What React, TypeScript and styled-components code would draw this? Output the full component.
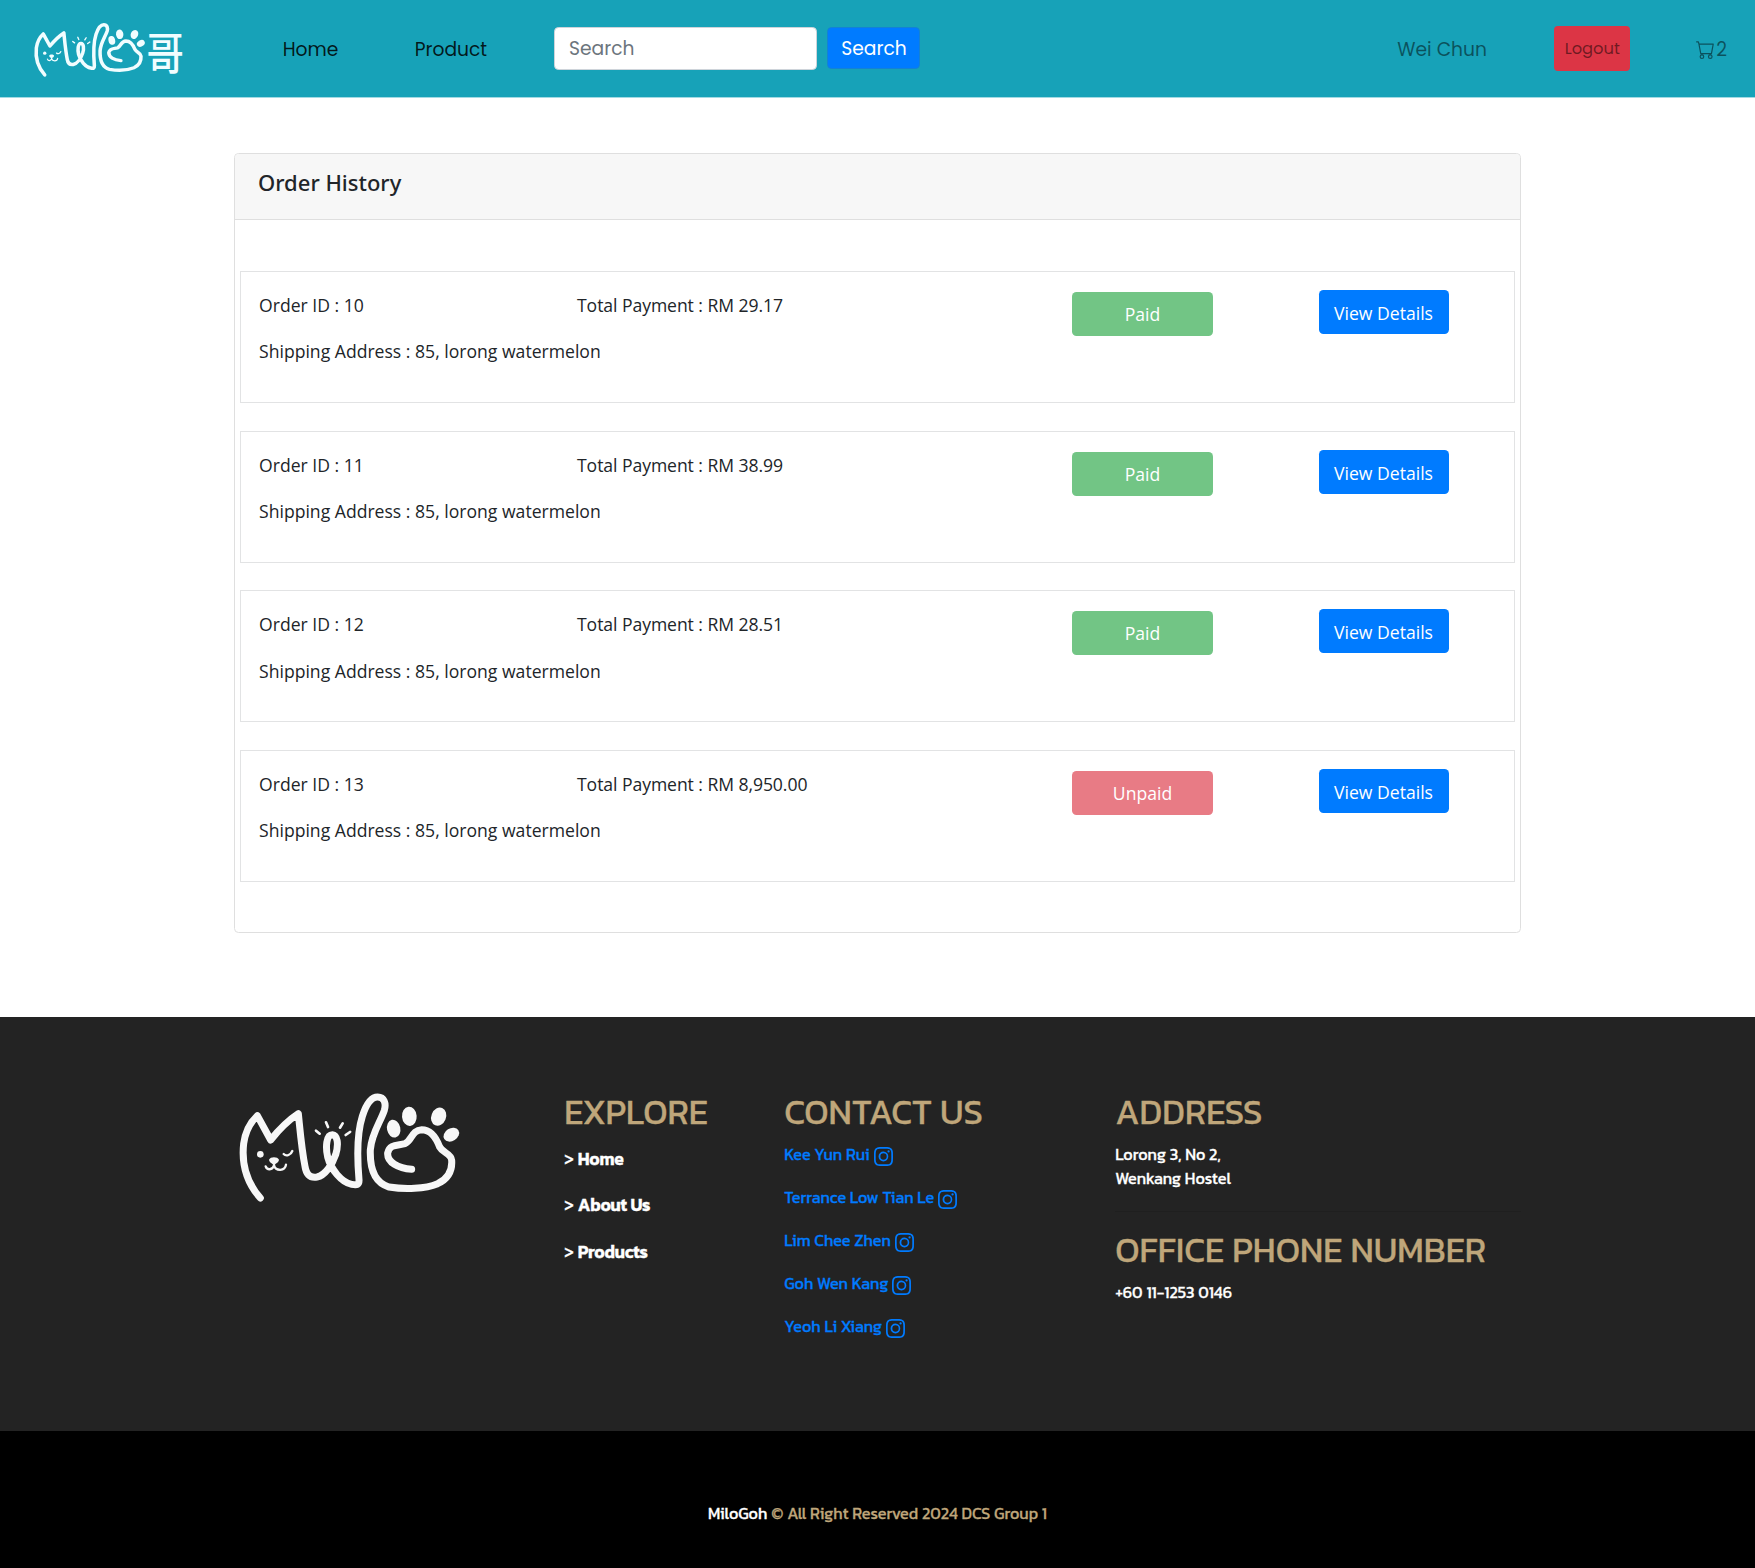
import React from "react";
import styled, { createGlobalStyle } from "styled-components";
import { BsCart, BsInstagram } from "react-icons/bs";

const uiFont = `"Open Sans", "Noto Sans", sans-serif`;
const navFont = `Poppins, Inter, sans-serif`;
const footerFont = `Kanit, Roboto, sans-serif`;

const GlobalStyle = createGlobalStyle`
  *, *::before, *::after { box-sizing: border-box; }
  body {
    margin: 0;
    background: #fff;
    color: #212529;
    font-family: ${uiFont};
    font-size: 17.6px;
    line-height: 27px;
  }
  a { text-decoration: none; }
`;

/* ---------- shared ---------- */

const Text = styled.span<{ $track?: number }>`
  letter-spacing: ${(p) => p.$track ?? 0}px;
  white-space: nowrap;
`;

const LogoSvg = styled.svg`
  display: block;
  flex: none;
  overflow: visible;
`;

function MiloArt() {
  return (
    <g fill="none" stroke="currentColor" strokeWidth={21} strokeLinecap="round" strokeLinejoin="round">
      <path d="M106 385 C62 335 50 275 56 222 C61 184 78 156 97 138 L137 211 C160 182 190 152 220 132 C226 190 230 240 240 290 C245 322 262 324 276 322 C300 317 322 285 332 255 C342 222 337 196 322 195 C304 195 301 232 308 262 C318 300 350 338 380 344 C396 347 403 346 402 330 C396 260 396 190 412 140 C424 102 440 82 458 82 C478 82 484 102 478 122 C466 158 440 190 436 240 C434 300 450 340 492 352 C540 360 600 358 638 342 C672 326 682 300 680 272 C678 250 655 252 644 232 C634 205 618 180 590 180 C560 181 562 212 540 222 C518 228 494 222 488 250 C486 278 520 296 560 299" />
      <g strokeWidth={7}>
        <path d="M122 290 C126 302 142 302 147 288 C152 304 180 306 183 285" />
        <path d="M147 277 V290" />
        <path d="M176 253 C184 262 198 255 202 244" />
      </g>
      <g strokeWidth={8}>
        <path d="M273 183 L284 192" />
        <path d="M303 158 L309 172" />
        <path d="M353 161 L345 174" />
        <path d="M375 187 L362 196" />
      </g>
      <g fill="currentColor" stroke="none">
        <circle cx="106" cy="254" r="10" />
        <path d="M132 270 C136 260 158 260 162 270 C160 280 152 282 147 284 C142 282 134 280 132 270 Z" />
        <ellipse cx="506" cy="177" rx="20" ry="27" transform="rotate(-12 506 177)" />
        <ellipse cx="553" cy="140" rx="22" ry="29" transform="rotate(-5 553 140)" />
        <ellipse cx="641" cy="141" rx="22" ry="28" transform="rotate(22 641 141)" />
        <ellipse cx="679" cy="195" rx="25" ry="19" transform="rotate(-32 679 195)" />
      </g>
    </g>
  );
}

/* ---------- navigation ---------- */

const Nav = styled.nav`
  display: flex;
  align-items: center;
  height: 98px;
  padding: 0 28px 0 33px;
  background: #17a2b8;
  border-bottom: 1px solid #a3dae3;
  font-family: ${navFont};
  font-size: 18.7px;
`;

const Brand = styled.a`
  display: flex;
  width: 249.7px;
  padding-top: 3px;
  color: #f1fdff;
`;

const Glyph = styled.text`
  fill: currentColor;
  font-family: "Noto Sans CJK SC", "Noto Sans CJK TC", sans-serif;
  font-size: 42px;
  font-weight: 500;
`;

const NavLink = styled.a<{ $width: number; $active?: boolean }>`
  flex: none;
  width: ${(p) => p.$width}px;
  padding-top: 2px;
  color: ${(p) => (p.$active ? "rgba(0,0,0,.85)" : "rgba(0,0,0,.5)")};
`;

const SearchForm = styled.form`
  display: flex;
  align-items: center;
  gap: 10px;
  flex: 1;
  padding-bottom: 1px;
`;

const SearchInput = styled.input`
  width: 263.5px;
  height: 43px;
  padding: 0 14px;
  border: 1px solid #ced4da;
  border-radius: 4.5px;
  background: #fff;
  font: inherit;
  &::placeholder { color: #6c757d; opacity: 1; }
`;

const SearchButton = styled.button`
  width: 93px;
  height: 42px;
  padding: 0;
  border: 1px solid #1482d3;
  border-radius: 4.5px;
  background: #007bff;
  color: #fff;
  font: inherit;
`;

const LogoutButton = styled.button`
  width: 76px;
  height: 45px;
  margin-right: 66px;
  padding: 0;
  border: 0;
  border-radius: 4px;
  background: #dc3545;
  color: rgba(0, 0, 0, 0.5);
  font: inherit;
  font-size: 16.3px;
`;

const CartLink = styled.a`
  display: flex;
  align-items: center;
  gap: 1px;
  padding-top: 2px;
  color: rgba(0, 0, 0, 0.5);
  svg { width: 19px; height: 19px; }
`;

/* ---------- order history ---------- */

const Card = styled.section`
  width: 1287px;
  margin: 55px auto 84px;
  border: 1px solid #dfdfdf;
  border-radius: 4.5px;
  background: #fff;
`;

const CardHeader = styled.header`
  height: 66px;
  padding: 15px 23px;
  background: #f7f7f7;
  border-bottom: 1px solid #dfdfdf;
  border-radius: 4px 4px 0 0;
`;

const CardTitle = styled.h5`
  margin: 0;
  font-family: "Noto Sans", "Open Sans", sans-serif;
  font-size: 22px;
  font-weight: 500;
  line-height: 27px;
`;

const OrderList = styled.div`
  display: flex;
  flex-direction: column;
  gap: 27.7px;
  padding: 51px 5px 50px;
`;

const OrderRow = styled.article`
  display: grid;
  grid-template-columns: 318px 494.5px 247px auto;
  height: 132px;
  padding: 18px 17px 18px 18px;
  border: 1px solid #e2e3e4;
`;

const OrderInfo = styled.div`
  display: flex;
  flex-direction: column;
  gap: 19.3px;
  padding-top: 2px;
`;

const Status = styled.button<{ $paid: boolean }>`
  width: 141px;
  height: 44px;
  margin-top: 2px;
  padding: 1px 0 0 1px;
  border: 0;
  border-radius: 4.5px;
  background: ${(p) => (p.$paid ? "#28a745" : "#dc3545")};
  color: #fff;
  font: inherit;
  opacity: 0.65;
`;

const DetailsButton = styled.button`
  width: 130px;
  height: 44px;
  padding: 3px 0 0;
  border: 0;
  border-radius: 4.5px;
  background: #007bff;
  color: #fff;
  font: inherit;
`;

/* ---------- footer ---------- */

const Footer = styled.footer`
  font-family: ${footerFont};
  font-size: 16.2px;
  font-weight: 400;
  line-height: 24px;
  color: #fff;
  -webkit-text-stroke: 0.3px currentColor;
`;

const FooterMain = styled.div`
  display: grid;
  grid-template-columns: 330.2px 220px 331px 1fr;
  height: 414px;
  padding: 75px 234px 0;
  background: #232323;
`;

const FooterLogo = styled.div`
  padding: 0 0 0 3px;
  margin-top: -1px;
  color: #f7f7f7;
`;

const Heading = styled.h2`
  margin: 0 0 10px;
  color: #bfa67a;
  font-size: 34.9px;
  font-weight: 400;
  line-height: 40px;
  white-space: nowrap;
`;

const ExploreList = styled.ul`
  display: flex;
  flex-direction: column;
  gap: 22.4px;
  margin: 15px 0 0;
  padding: 0;
  list-style: none;
  font-size: 17.5px;
`;

const ExploreItem = styled.li`
  display: flex;
  gap: 4px;
  a { color: #fff; font-weight: 600; }
`;

const ContactList = styled.div`
  display: flex;
  flex-direction: column;
  gap: 19.1px;
`;

const ContactLink = styled.a`
  display: flex;
  gap: 4px;
  color: #007bff;
  svg { width: 19px; height: 19px; margin-top: 5px; }
`;

const Address = styled.p`
  display: flex;
  flex-direction: column;
  margin: 0;
`;

const Divider = styled.hr`
  margin: 21px 0 18px;
  border: 0;
  border-top: 1px solid rgba(0, 0, 0, 0.1);
`;

const Copyright = styled.div`
  display: flex;
  justify-content: center;
  gap: 4px;
  height: 137px;
  padding-top: 70px;
  background: #000;
  color: #bfa67a;
  a { color: #fff; }
`;

const orders = [
  { id: 10, total: "29.17", paid: true },
  { id: 11, total: "38.99", paid: true },
  { id: 12, total: "28.51", paid: true },
  { id: 13, total: "8,950.00", paid: false },
];

const explore = ["Home", "About Us", "Products"];

const contacts = [
  "Kee Yun Rui",
  "Terrance Low Tian Le",
  "Lim Chee Zhen",
  "Goh Wen Kang",
  "Yeoh Li Xiang",
];

export default function App() {
  return (
    <>
      <GlobalStyle />
      <Nav>
        <Brand href="#">
          <LogoSvg width="156" height="60" viewBox="33 20 156 60">
            <g transform="translate(26.96 11.07) scale(0.1677 0.1657)">
              <MiloArt />
            </g>
            <Glyph transform="translate(146.5 69.5) scale(0.89 1.05)">哥</Glyph>
          </LogoSvg>
        </Brand>
        <NavLink href="#" $width={132} $active>Home</NavLink>
        <NavLink href="#" $width={139.3} $active>Product</NavLink>
        <SearchForm>
          <SearchInput placeholder="Search" />
          <SearchButton type="button">Search</SearchButton>
        </SearchForm>
        <NavLink href="#" $width={157}>Wei Chun</NavLink>
        <LogoutButton>Logout</LogoutButton>
        <CartLink href="#"><BsCart /><Text>2</Text></CartLink>
      </Nav>

      <Card>
        <CardHeader><CardTitle>Order History</CardTitle></CardHeader>
        <OrderList>
          {orders.map((o) => (
            <OrderRow key={o.id}>
              <OrderInfo>
                <Text>Order ID : {o.id}</Text>
                <Text>Shipping Address : 85, lorong watermelon</Text>
              </OrderInfo>
              <OrderInfo><Text $track={-0.07}>Total Payment : RM {o.total}</Text></OrderInfo>
              <Status $paid={o.paid}>{o.paid ? "Paid" : "Unpaid"}</Status>
              <DetailsButton>View Details</DetailsButton>
            </OrderRow>
          ))}
        </OrderList>
      </Card>

      <Footer>
        <FooterMain>
          <FooterLogo>
            <LogoSvg width="224" height="112.7" viewBox="36 64 672 338"><MiloArt /></LogoSvg>
          </FooterLogo>
          <div>
            <Heading>EXPLORE</Heading>
            <ExploreList>
              {explore.map((name) => (
                <ExploreItem key={name}>&gt;<a href="#"><Text $track={-0.25}>{name}</Text></a></ExploreItem>
              ))}
            </ExploreList>
          </div>
          <div>
            <Heading>CONTACT US</Heading>
            <ContactList>
              {contacts.map((name) => (
                <ContactLink key={name} href="#">{name}<BsInstagram /></ContactLink>
              ))}
            </ContactList>
          </div>
          <div>
            <Heading>ADDRESS</Heading>
            <Address>
              <Text>Lorong 3, No 2,</Text>
              <Text>Wenkang Hostel</Text>
            </Address>
            <Divider />
            <Heading>OFFICE PHONE NUMBER</Heading>
            <Text>+60 11-1253 0146</Text>
          </div>
        </FooterMain>
        <Copyright>
          <a href="#">MiloGoh</a>
          <Text>© All Right Reserved 2024 DCS Group 1</Text>
        </Copyright>
      </Footer>
    </>
  );
}
